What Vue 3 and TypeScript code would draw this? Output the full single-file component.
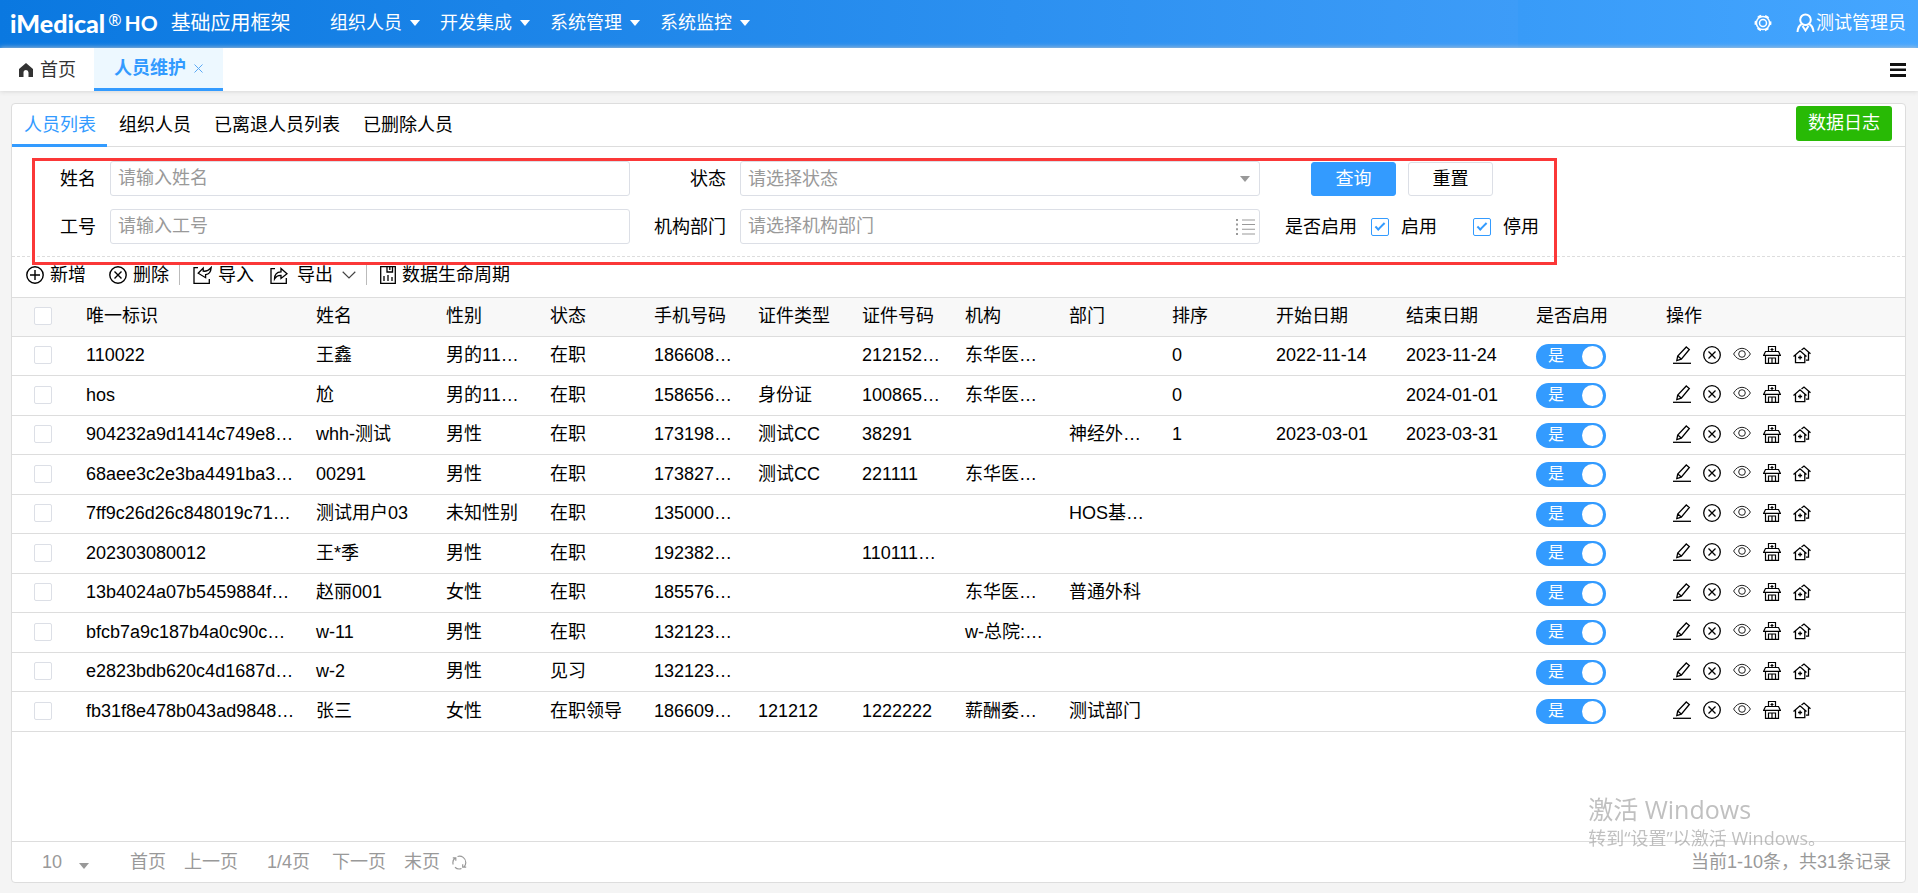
<script setup lang="ts">
import { reactive, ref } from 'vue'

interface Person {
  id: string
  name: string
  gender: string
  status: string
  phone: string
  certType: string
  certNo: string
  org: string
  dept: string
  sort: string
  start: string
  end: string
  enabled: boolean
}

const menus: string[] = ['组织人员', '开发集成', '系统管理', '系统监控']
const subTabs: string[] = ['人员列表', '组织人员', '已离退人员列表', '已删除人员']
const activeSub = ref(0)

const query = reactive({ name: '', status: '', code: '', dept: '', on: true, off: true })
const pageSize = ref('10')

const headers: string[] = [
  '唯一标识', '姓名', '性别', '状态', '手机号码', '证件类型', '证件号码',
  '机构', '部门', '排序', '开始日期', '结束日期', '是否启用', '操作',
]
const textKeys = [
  'id', 'name', 'gender', 'status', 'phone', 'certType', 'certNo',
  'org', 'dept', 'sort', 'start', 'end',
] as const

const source: string[][] = [
  ['110022', '王鑫', '男的11…', '在职', '186608…', '', '212152…', '东华医…', '', '0', '2022-11-14', '2023-11-24'],
  ['hos', '尬', '男的11…', '在职', '158656…', '身份证', '100865…', '东华医…', '', '0', '', '2024-01-01'],
  ['904232a9d1414c749e8…', 'whh-测试', '男性', '在职', '173198…', '测试CC', '38291', '', '神经外…', '1', '2023-03-01', '2023-03-31'],
  ['68aee3c2e3ba4491ba3…', '00291', '男性', '在职', '173827…', '测试CC', '221111', '东华医…', '', '', '', ''],
  ['7ff9c26d26c848019c71…', '测试用户03', '未知性别', '在职', '135000…', '', '', '', 'HOS基…', '', '', ''],
  ['202303080012', '王*季', '男性', '在职', '192382…', '', '110111…', '', '', '', '', ''],
  ['13b4024a07b5459884f…', '赵丽001', '女性', '在职', '185576…', '', '', '东华医…', '普通外科', '', '', ''],
  ['bfcb7a9c187b4a0c90c…', 'w-11', '男性', '在职', '132123…', '', '', 'w-总院:…', '', '', '', ''],
  ['e2823bdb620c4d1687d…', 'w-2', '男性', '见习', '132123…', '', '', '', '', '', '', ''],
  ['fb31f8e478b043ad9848…', '张三', '女性', '在职领导', '186609…', '121212', '1222222', '薪酬委…', '测试部门', '', '', ''],
]

const people = reactive<Person[]>(
  source.map((cells) => {
    const person = { enabled: true } as Person
    textKeys.forEach((key, i) => { person[key] = cells[i] })
    return person
  }),
)
</script>

<template>
  <div class="app">
    <header class="topbar">
      <div class="brand">
        <span class="logo">iMedical</span><sup class="reg">®</sup><span class="ho">HO</span>
        <span class="product">基础应用框架</span>
      </div>
      <nav class="menus">
        <button v-for="m in menus" :key="m" type="button" class="menu">{{ m }}<i class="caret"></i></button>
      </nav>
      <div class="account">
        <button type="button" class="plain" aria-label="设置">
          <svg width="18" height="18" viewBox="0 0 18 18" fill="none" stroke="#fff">
            <circle cx="9" cy="9" r="6.600" stroke-width="1.500" />
            <circle cx="9" cy="9" r="7.600" stroke-width="1.700" stroke-dasharray="4 3.960" stroke-dashoffset="2" />
            <circle cx="9" cy="9" r="3.500" stroke-width="1.500" />
          </svg>
        </button>
        <button type="button" class="plain user">
          <svg width="19" height="20" viewBox="0 0 19 20" fill="none" stroke="#fff" stroke-width="2">
            <circle cx="9.500" cy="6.800" r="5.300" />
            <path d="M5.800 11C3 12.500 1.800 15.500 1.500 19M13.200 11c2.800 1.500 4 4.500 4.300 8M6.500 13l3 4.500 3-4.500" />
          </svg>
          <span>测试管理员</span>
        </button>
      </div>
    </header>

    <div class="pagetabs">
      <a href="#" class="home">
        <svg width="14" height="14" viewBox="0 0 14 14"><path d="M7 0 14 6v8H9.500V9.500a2.500 2.500 0 0 0-5 0V14H0V6z" fill="#333" /></svg>
        首页
      </a>
      <div class="opened">
        <a href="#">人员维护</a>
        <button type="button" class="plain" aria-label="关闭">
          <svg width="9" height="9" viewBox="0 0 9 9" stroke="#5aa9f5" stroke-width="1"><path d="M.5.5l8 8M8.500.5l-8 8" /></svg>
        </button>
      </div>
      <button type="button" class="plain burger" aria-label="菜单">
        <svg width="16" height="14" viewBox="0 0 16 14" fill="#111"><path d="M0 0h16v3H0zM0 5.500h16v2.500H0zM0 11h16v3H0z" /></svg>
      </button>
    </div>

    <main class="panel">
      <div class="subtabs">
        <button
          v-for="(t, i) in subTabs" :key="t" type="button" class="subtab"
          :class="{ active: i === activeSub }" @click="activeSub = i"
        >{{ t }}</button>
        <button type="button" class="log">数据日志</button>
      </div>

      <form class="search" @submit.prevent>
        <div class="fields">
          <label for="f-name">姓名</label>
          <input id="f-name" v-model="query.name" class="box" type="text" placeholder="请输入姓名">
          <label for="f-status">状态</label>
          <div class="combo">
            <select id="f-status" v-model="query.status" class="box">
              <option value="">请选择状态</option>
              <option value="on">在职</option>
            </select>
            <i class="caret gray"></i>
          </div>
          <div class="buttons">
            <button type="submit" class="btn primary">查询</button>
            <button type="reset" class="btn">重置</button>
          </div>

          <label for="f-code">工号</label>
          <input id="f-code" v-model="query.code" class="box" type="text" placeholder="请输入工号">
          <label for="f-dept">机构部门</label>
          <div class="combo">
            <input id="f-dept" v-model="query.dept" class="box" type="text" placeholder="请选择机构部门">
            <svg class="list" width="20" height="16" viewBox="0 0 20 16" fill="#999">
              <path d="M0 0h2v2H0zM0 4.600h2v2H0zM0 9.200h2v2H0zM0 14h2v2H0zM6 .5h13v1H6zM6 5h13v1H6zM6 9.700h13v1H6zM6 14.500h13v1H6z" />
            </svg>
          </div>
          <div class="checks">
            <span class="caption">是否启用</span>
            <label class="check"><input v-model="query.on" type="checkbox" class="tick">启用</label>
            <label class="check"><input v-model="query.off" type="checkbox" class="tick">停用</label>
          </div>
        </div>
      </form>

      <div class="toolbar">
        <button type="button" class="tool">
          <svg width="18" height="18" viewBox="0 0 18 18" fill="none" stroke="#000" stroke-width="1.400"><circle cx="9" cy="9" r="8.200" /><path d="M9 4v10M4 9h10" /></svg>
          新增
        </button>
        <button type="button" class="tool del">
          <svg width="18" height="18" viewBox="0 0 18 18" fill="none" stroke="#000" stroke-width="1.400"><circle cx="9" cy="9" r="8.200" /><path d="M5.500 5.500l7 7M12.500 5.500l-7 7" /></svg>
          删除
        </button>
        <i class="sep"></i>
        <button type="button" class="tool">
          <svg width="19" height="18" viewBox="0 0 19 18" fill="none" stroke="#000" stroke-width="1.300">
            <path d="M5 1.700H1v15.600h15.300V13" />
            <path d="M18.200 1.500c-.3 4.500-2.200 6.800-5.600 7.200v3L5.200 7.200l5-5.200v3.200c3 .3 5.600-.8 8-3.700z" />
          </svg>
          导入
        </button>
        <button type="button" class="tool out">
          <svg width="18" height="18" viewBox="0 0 18 18" fill="none" stroke="#000" stroke-width="1.300">
            <path d="M5 2.700H1v14.600h15.300V12" />
            <path d="M4.500 13c0-5 2.500-7 6.500-7.200V2.500l6 5.200-6 4.800V9.300C8 9.200 6 10.300 4.500 13z" />
          </svg>
          <span>导出</span>
          <svg width="14" height="8" viewBox="0 0 14 8" fill="none" stroke="#444" stroke-width="1.200"><path d="M.7.8 7 7 13.300.8" /></svg>
        </button>
        <i class="sep"></i>
        <button type="button" class="tool">
          <svg width="16" height="18" viewBox="0 0 16 18" fill="none" stroke="#000" stroke-width="1.300">
            <path d="M.7.7h14.600v16.600H.7zM4 15v-5M8 15V9M12 15v-4M7 1v5h5.500V1M9.800 1v3" />
          </svg>
          数据生命周期
        </button>
      </div>

      <div class="grid">
        <table>
          <colgroup>
            <col class="c-tick"><col class="c-id"><col class="c-wide">
            <col v-for="n in 4" :key="'a' + n" class="c-mid"><col class="c-slim">
            <col class="c-mid"><col class="c-slim"><col class="c-mid">
            <col v-for="n in 3" :key="'b' + n" class="c-wide"><col>
          </colgroup>
          <thead>
            <tr>
              <th class="first"><input type="checkbox" class="tick" aria-label="全选"></th>
              <th v-for="h in headers" :key="h" scope="col">{{ h }}</th>
            </tr>
          </thead>
          <tbody>
            <tr v-for="p in people" :key="p.id">
              <td class="first"><input type="checkbox" class="tick" :aria-label="'选择 ' + p.name"></td>
              <td v-for="k in textKeys" :key="k">{{ p[k] }}</td>
              <td class="tall">
                <label class="switch">
                  <input v-model="p.enabled" type="checkbox" :aria-label="'是否启用 ' + p.name">
                  <span>{{ p.enabled ? '是' : '否' }}</span>
                </label>
              </td>
              <td class="tall">
                <div class="ops">
                  <button type="button" class="plain" aria-label="编辑">
                    <svg width="18" height="18" viewBox="0 0 18 18" fill="none" stroke="#000" stroke-width="1.300"><path d="M0 17.300h18" /><path d="M13.300 1l3 2.500-8 9.600-4.500 1.500.9-4.600zM4.700 10l3.600 3.100" /></svg>
                  </button>
                  <button type="button" class="plain" aria-label="删除">
                    <svg width="18" height="18" viewBox="0 0 18 18" fill="none" stroke="#000" stroke-width="1.300"><circle cx="9" cy="9" r="8.300" /><path d="M5.500 5.500l7 7M12.500 5.500l-7 7" /></svg>
                  </button>
                  <button type="button" class="plain" aria-label="查看">
                    <svg width="18" height="18" viewBox="0 0 18 18" fill="none" stroke="#222"><path d="M.6 8C5 .4 13 .4 17.400 8 13 15.600 5 15.600.6 8z" /><circle cx="9" cy="8" r="3.300" /></svg>
                  </button>
                  <button type="button" class="plain" aria-label="机构">
                    <svg width="18" height="18" viewBox="0 0 18 18" fill="none" stroke="#000" stroke-width="1.200"><path d="M5.500 5.500v-5h7v5M9 2v3M7.500 3.500h3M2.500 5.500h13l1.900 3.900H.6zM2.500 9.500v7.900h13V9.500M5.500 17v-5h7v5M9 12v5" /></svg>
                  </button>
                  <button type="button" class="plain" aria-label="家庭">
                    <svg width="18" height="18" viewBox="0 0 18 18" fill="none" stroke="#000" stroke-width="1.300"><path d="M.5 10.500 7 4.800l6.500 5.700M2.500 9.200v7.500h9.300V9.200M7.100 9.500v4M5.100 11.500h4M8.500 4l2.500-2 6.500 5.700M15.500 6.500v7.700H13" /></svg>
                  </button>
                </div>
              </td>
            </tr>
          </tbody>
        </table>
      </div>

      <footer class="pager">
        <div class="size">
          <select v-model="pageSize" aria-label="每页条数"><option>10</option><option>20</option></select>
          <i class="caret gray"></i>
        </div>
        <a href="#" class="p-first">首页</a>
        <a href="#" class="p-prev">上一页</a>
        <span class="p-now">1/4页</span>
        <a href="#" class="p-next">下一页</a>
        <a href="#" class="p-last">末页</a>
        <button type="button" class="plain" aria-label="刷新">
          <svg width="15" height="15" viewBox="0 0 15 15" fill="none" stroke="#999" stroke-width="1.200"><path d="M1.200 9.500A6.300 6.300 0 0 1 3 3M5.500 1.500a6.300 6.300 0 0 1 8.300 6M12 12a6.300 6.300 0 0 0 1.800-4.500M9.500 13.500a6.300 6.300 0 0 1-6.500-1.200M.8 2.800h3v3M14.200 12.200h-3.500v-3" /></svg>
        </button>
        <span class="total">当前1-10条，共31条记录</span>
      </footer>
    </main>

    <aside class="activate">
      <p class="big">激活 Windows</p>
      <p>转到“设置”以激活 Windows。</p>
    </aside>
  </div>
</template>

<style>
body {
  background: #f4f4f4;
}
</style>

<style scoped>
.app {
  display: flex;
  flex-direction: column;
  min-height: 100vh;
  font: 18px/24px "Liberation Sans", "Noto Sans CJK SC", sans-serif;
  color: #000;
  white-space: nowrap;
}
*,
*::before,
*::after {
  box-sizing: border-box;
}
button,
input,
select {
  font: inherit;
  color: inherit;
  margin: 0;
  padding: 0;
}
button {
  border: 0;
  background: none;
}
a {
  color: inherit;
  text-decoration: none;
}
svg {
  display: block;
  flex: none;
}
.plain {
  display: flex;
  align-items: center;
}
.caret {
  flex: none;
  border: 5px solid transparent;
  border-top: 6px solid #fff;
  border-bottom: 0;
}
.caret.gray {
  border-top-color: #999;
}

.topbar {
  display: flex;
  align-items: center;
  height: 48px;
  padding: 0 12px 2px 10px;
  color: #fff;
  background: linear-gradient(90deg, #0a78e0 0, #3d9cf8 1518px, #389bf8 1518px, #45a6ff 100%);
}
.brand {
  display: flex;
  align-items: center;
  width: 320px;
}
.logo {
  font: 900 25px/28px Lato, sans-serif;
}
.reg {
  margin: 0 3px 6px;
  font: 16px/20px "Noto Sans", sans-serif;
}
.ho {
  font: 700 21px/24px Lato, sans-serif;
}
.product {
  margin-left: 13px;
  font-size: 20px;
}
.menus {
  display: flex;
  gap: 20px;
}
.menu {
  display: flex;
  align-items: center;
  gap: 8px;
}
.account {
  display: flex;
  align-items: center;
  gap: 24px;
  margin-left: auto;
}
.user {
  gap: 1px;
}

.pagetabs {
  position: relative;
  display: flex;
  align-items: center;
  height: 43px;
  padding-right: 12px;
  background: #fff;
  box-shadow: 0 0 5px #ccc;
}
.home {
  display: flex;
  align-items: center;
  gap: 7px;
  width: 94px;
  padding-left: 19px;
  color: #333;
}
.opened {
  display: flex;
  align-items: center;
  align-self: stretch;
  gap: 8px;
  padding: 0 20px;
  border-bottom: 3px solid #339bff;
  background: #edf8ff;
  color: #339bff;
  font-weight: 700;
}
.burger {
  margin-left: auto;
}

.panel {
  display: flex;
  flex: 1;
  flex-direction: column;
  margin: 12px 12px 10px 11px;
  border: 1px solid #ddd;
  border-radius: 4px;
  background: #fff;
}
.subtabs {
  display: flex;
  align-items: center;
  height: 43px;
  padding-right: 13px;
  border-bottom: 1px solid #ddd;
}
.subtab {
  height: 43px;
  padding: 2px 11px 0 12px;
  border-bottom: 3px solid transparent;
}
.subtab.active {
  border-color: #339bff;
  color: #339bff;
}
.log {
  height: 35px;
  margin: 0 0 4px auto;
  padding: 0 12px;
  border-radius: 3px;
  background: #28ba05;
  color: #fff;
}

.search {
  padding: 14px 0 12px;
  border-bottom: 1px dashed #ddd;
}
.fields {
  position: relative;
  display: grid;
  grid-template-columns: 98px minmax(0, 1fr) 110px minmax(0, 1fr) 297px;
  row-gap: 13px;
  align-items: center;
  max-width: 1545px;
}
.fields::after {
  content: "";
  position: absolute;
  inset: -3px 0 -21px 20px;
  border: 3px solid #fb3838;
  pointer-events: none;
}
.fields > label {
  padding-right: 14px;
  text-align: right;
}
.box {
  display: block;
  width: 100%;
  height: 35px;
  padding: 0 7px;
  border: 1px solid #dcdfe6;
  border-radius: 3px;
  background: #fff;
  appearance: none;
  outline: 0;
}
.box::placeholder,
select.box {
  color: #999;
}
.combo {
  position: relative;
}
.combo .caret {
  position: absolute;
  top: 15px;
  right: 10px;
}
.list {
  position: absolute;
  top: 10px;
  right: 4px;
}
.buttons {
  display: flex;
  gap: 12px;
  padding-left: 51px;
}
.btn {
  width: 85px;
  height: 34px;
  border: 1px solid #dcdfe6;
  border-radius: 3px;
}
.primary {
  border-color: #339bff;
  background: #339bff;
  color: #fff;
}
.checks,
.check {
  display: flex;
  align-items: center;
}
.checks {
  padding-left: 25px;
}
.caption {
  flex: none;
  width: 86px;
}
.check {
  flex: none;
  gap: 12px;
}
.check + .check {
  margin-left: 36px;
}
.tick {
  display: grid;
  place-items: center;
  flex: none;
  width: 18px;
  height: 18px;
  border: 1px solid #dcdfe6;
  border-radius: 2px;
  background: #fff;
  appearance: none;
}
.tick:checked {
  border-color: #339bff;
}
.tick:checked::after {
  content: "";
  width: 10px;
  height: 5px;
  margin-bottom: 3px;
  border: solid #339bff;
  border-width: 0 0 2px 2px;
  transform: rotate(-45deg);
}

.toolbar {
  display: flex;
  align-items: center;
  height: 40px;
  padding: 0 14px 4px;
}
.tool {
  display: flex;
  align-items: center;
  gap: 6px;
}
.del {
  margin-left: 23px;
}
.out {
  gap: 9px;
  margin-left: 16px;
}
.sep {
  width: 1px;
  height: 20px;
  margin: 0 13px 0 10px;
  background: #bbb;
}

.grid {
  flex: 1;
  border-top: 1px solid #ddd;
  overflow: hidden;
}
table {
  width: 100%;
  border-spacing: 0;
  table-layout: fixed;
}
th,
td {
  height: 39px;
  padding: 0 0 2px 10px;
  border-bottom: 1px solid #ddd;
  text-align: left;
  font-weight: inherit;
}
th {
  background: #f8f8f8;
}
tbody tr:nth-child(even) td {
  height: 40px;
}
.first {
  padding-left: 22px;
}
.tall {
  padding-bottom: 0;
}
.c-tick {
  width: 64px;
}
.c-id {
  width: 230px;
}
.c-wide {
  width: 130px;
}
.c-mid {
  width: 104px;
}
.c-slim {
  width: 103px;
}
.switch {
  position: relative;
  display: block;
  width: 70px;
  height: 25px;
}
.switch input {
  width: 70px;
  height: 25px;
  border-radius: 13px;
  background: #bbb;
  appearance: none;
  display: flex;
  align-items: center;
  padding: 0 3px;
}
.switch input:checked {
  justify-content: flex-end;
  background: #339bff;
}
.switch input::after {
  content: "";
  width: 21px;
  height: 21px;
  border-radius: 50%;
  background: #fff;
}
.switch span {
  position: absolute;
  top: 0;
  left: 12px;
  color: #fff;
  font-size: 16px;
  pointer-events: none;
}
.ops {
  display: flex;
  gap: 12px;
  padding: 0 0 3px 7px;
}

.pager {
  display: flex;
  align-items: center;
  height: 41px;
  padding: 0 14px 0 30px;
  border-top: 1px solid #ddd;
  color: #999;
}
.size {
  display: flex;
  align-items: center;
  width: 88px;
}
.size select {
  width: 37px;
  border: 0;
  background: none;
  appearance: none;
}
.size .caret {
  margin-top: 8px;
}
.p-first,
.p-next {
  margin-right: 18px;
}
.p-prev {
  margin-right: 29px;
}
.p-now {
  margin-right: 22px;
}
.p-last {
  margin-right: 12px;
}
.total {
  margin-left: auto;
}

.activate {
  position: fixed;
  right: 92px;
  bottom: 43px;
  color: rgba(150, 150, 150, 0.6);
  font: 18px/24px "Open Sans", "Noto Sans CJK SC", sans-serif;
  pointer-events: none;
}
.activate p {
  margin: 0;
}
.activate .big {
  font-size: 25px;
  line-height: 34px;
}
</style>
